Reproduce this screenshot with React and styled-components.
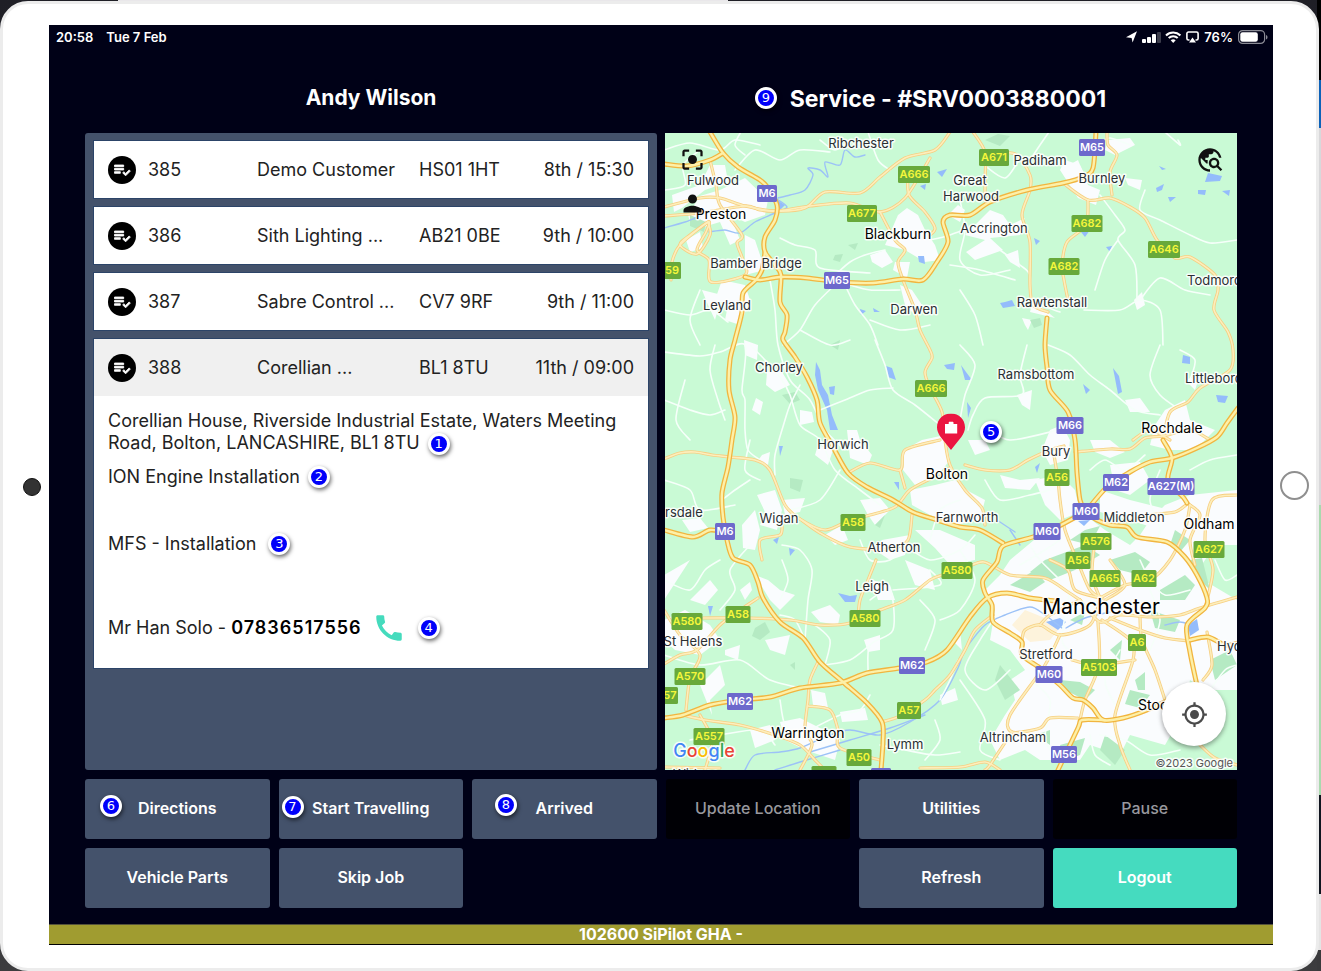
import React from 'react';
import styled, { createGlobalStyle, css } from 'styled-components';
import {
  MdPlaylistAddCheck,
  MdCall,
  MdCenterFocusStrong,
  MdPerson,
  MdTravelExplore,
  MdMyLocation,
} from 'react-icons/md';

const Global = createGlobalStyle`
  * { box-sizing: border-box; }
  html { height: 100%; }
  body {
    margin: 0;
    min-height: 100%;
    font-family: Inter, "Liberation Sans", sans-serif;
    background:
      linear-gradient(#e9e7ea, #e9e7ea) 118px 0 / 610px 2px no-repeat,
      linear-gradient(#000 0 80px, #0d62b8 80px 128px, #d8d8da 128px 505px, #a9d9ae 505px 795px, #10151f 795px 894px, #e4e4e4 894px 950px, #3a3a3c 950px) right top / 4px 100% no-repeat,
      linear-gradient(#1f1f26, #3c3c3e);
  }
  button { font: inherit; border: 0; padding: 0; cursor: pointer; }
`;

const Tablet = styled.div`
  display: grid;
  grid-template-columns: 46px minmax(0, 1fr) 43px;
  align-items: center;
  min-height: calc(100vh - 1px);
  margin: 1px 2px 0 0;
  padding: 21px 0 23px;
  background: #fff;
  border: 3px solid #ececec;
  border-radius: 28px;
`;

const Camera = styled.div`
  justify-self: end;
  width: 18px;
  height: 18px;
  margin: 4px 8px 0 0;
  border-radius: 50%;
  background: #333;
  border: 1px solid #111;
`;

const HomeButton = styled.button`
  justify-self: center;
  width: 29px;
  height: 29px;
  border-radius: 50%;
  background: #fff;
  border: 2px solid #8f8f8f;
`;

const Screen = styled.div`
  align-self: stretch;
  display: flex;
  flex-direction: column;
  background: #000117;
  color: #fff;
  border-bottom: 1px solid #000;
`;

const StatusBar = styled.header`
  display: flex;
  align-items: center;
  justify-content: space-between;
  height: 24px;
  padding: 0 5px 0 7px;
  font-size: 13px;
  font-weight: 600;
`;

const StatusGroup = styled.div`
  display: flex;
  align-items: center;
  gap: ${(p) => p.$gap}px;
`;

const Main = styled.main`
  flex: 1;
  display: flex;
  flex-direction: column;
  gap: 9px;
  padding: 0 36px 16px;
`;

const Columns = styled.div`
  flex: 1;
  display: grid;
  grid-template-columns: repeat(2, minmax(0, 1fr));
  grid-template-rows: 84px minmax(0, 1fr);
  column-gap: 8px;
`;

const Heading = styled.h1`
  display: flex;
  align-items: center;
  justify-content: center;
  margin: 0;
  padding: ${(p) => (p.$large ? '16px 6px 0 0' : '14px 0 2px')};
  font-size: ${(p) => (p.$large ? 23 : 21)}px;
  font-weight: 700;
`;

const HeadingText = styled.span`
  position: relative;
`;

const Badge = styled.span`
  display: inline-flex;
  align-items: center;
  justify-content: center;
  flex: none;
  width: 22px;
  height: 22px;
  border: 3px solid #fff;
  border-radius: 50%;
  background: #0000fa;
  color: #fff;
  font: 13px/16px "DejaVu Sans", sans-serif;
  box-shadow: 1px 2px 4px rgba(0, 0, 0, 0.6);
  ${(p) =>
    p.$over &&
    css`
      position: absolute;
      left: ${p.$left};
      top: ${p.$top};
      transform: translate(-50%, -50%);
    `}
`;

const JobPanel = styled.section`
  display: flex;
  flex-direction: column;
  gap: 9px;
  padding: 8px 9px;
  background: #44526b;
  border-radius: 3px;
`;

const JobCard = styled.article`
  background: #fff;
  color: #222;
  font-size: 18px;
  box-shadow: 0 0 0 1px #2c4468;
`;

const JobHeader = styled.button`
  display: grid;
  grid-template-columns: 28px minmax(0, 97fr) minmax(0, 150fr) minmax(0, 90fr) minmax(0, 113fr);
  column-gap: 12px;
  align-items: center;
  width: 100%;
  height: 57px;
  padding: 0 14px;
  background: ${(p) => (p.$open ? '#f0f0f0' : '#fff')};
  color: inherit;
  text-align: left;
  white-space: nowrap;
`;

const JobIcon = styled.span`
  display: flex;
  align-items: center;
  justify-content: center;
  width: 28px;
  height: 28px;
  border-radius: 50%;
  background: #000;
  color: #fff;

  path:not([fill="none"]) { stroke: #fff; stroke-width: 1px; }
`;

const JobTime = styled.span`
  text-align: right;
`;

const JobDetails = styled.div`
  padding: 14px 14px 10px;
  line-height: 22px;
`;

const DetailLine = styled.p`
  display: flex;
  align-items: center;
  gap: ${(p) => p.$gap || 8}px;
  margin: 0;
  min-height: ${(p) => p.$height}px;
`;

const Address = styled.p`
  margin: 0 0 10px;

  ${Badge} {
    margin: -3px 0 -3px 8px;
    vertical-align: middle;
  }
`;

const PhoneLink = styled.a`
  color: #000;
  display: inline-flex;
  align-items: center;
  gap: 10px;
  font-weight: 600;
  letter-spacing: 1px;
  text-decoration: none;

  svg { color: #45dbbd; }
`;

const MapPanel = styled.section`
  position: relative;
  overflow: hidden;
  background: #c9fad5;
`;

const MapSvg = styled.svg`
  position: absolute;
  inset: 0;
  width: 100%;
  height: 100%;
  display: block;
`;

const MapTool = styled.button`
  position: absolute;
  top: ${(p) => p.$top}px;
  ${(p) => (p.$right ? 'right: 13px' : 'left: 14px')};
  display: flex;
  background: none;
  color: #111;
`;

const LocateButton = styled.button`
  position: absolute;
  right: 11px;
  bottom: 24px;
  display: flex;
  align-items: center;
  justify-content: center;
  width: 64px;
  height: 64px;
  border-radius: 50%;
  background: #fff;
  color: #4a4a4a;
  box-shadow: 0 2px 5px rgba(0, 0, 0, 0.4);
`;

const Pin = styled.svg`
  position: absolute;
  left: 50%;
  top: 47%;
  transform: translate(-50%, -50%);
`;

const ButtonGrid = styled.nav`
  display: grid;
  grid-template-columns: repeat(6, minmax(0, 1fr));
  gap: 9px;
`;

const tones = {
  normal: ['#44526b', '#fff'],
  disabled: ['#000005', '#98989e'],
  primary: ['#45dbbf', '#fff'],
};

const ActionButton = styled.button`
  position: relative;
  height: 60px;
  padding-bottom: 2px;
  border-radius: 3px;
  background: ${(p) => tones[p.$tone][0]};
  color: ${(p) => tones[p.$tone][1]};
  font-size: 16px;
  font-weight: ${(p) => (p.$tone === 'disabled' ? 500 : 600)};
  grid-column: ${(p) => p.$column || 'auto'};
`;

const Footer = styled.footer`
  height: 20px;
  background: #a09c30;
  border-top: 1px solid #55533a;
  font-size: 16px;
  line-height: 18px;
  font-weight: 700;
  text-align: center;
`;

/* Turns "x,y x,y ..." into a smooth path through every point. */
function curve(text) {
  const p = text.split(' ').map((s) => s.split(',').map(Number));
  let d = `M${p[0][0]} ${p[0][1]}`;
  for (let i = 0; i < p.length - 1; i++) {
    const a = p[i - 1] || p[i];
    const b = p[i];
    const c = p[i + 1];
    const e = p[i + 2] || c;
    d += `C${b[0] + (c[0] - a[0]) / 7} ${b[1] + (c[1] - a[1]) / 7} ${c[0] - (e[0] - b[0]) / 7} ${c[1] - (e[1] - b[1]) / 7} ${c[0]} ${c[1]}`;
  }
  return d;
}

const motorways = [
  '710,132 723,153 738,167 760,180 768,188 777,205 775,220 765,237 765,252 775,265 781,275 780,302 787,315 785,332 783,340 795,357 807,377 817,400 820,423 833,447 848,473 867,487 893,500 913,512 937,520 960,527 980,530 1003,543',
  '765,252 762,270 756,280 743,293 742,312 735,340 730,360 729,390 735,417 732,440 728,467 722,493 723,517 727,540 733,558 750,565 758,582 763,598 780,622 803,638 820,662 843,682 867,703 882,722 883,742 881,770',
  '745,277 760,280 780,277 807,278 840,282 873,283 903,279 923,280 937,262 948,242 943,222 950,215 970,215 990,202 1027,190 1063,183 1083,177 1093,168 1096,132',
  '1047,318 1045,345 1047,367 1050,390 1068,412 1075,440 1077,473 1080,500 1085,510',
  '1087,510 1107,487 1130,472 1150,462 1172,458 1197,448 1217,437 1227,423 1238,408',
  '1163,440 1172,458 1168,480 1183,497 1187,503',
  '1085,512 1057,527 1033,537 1003,546 997,562 983,580 985,593 992,605 993,622 1010,633 1022,642 1022,655 1040,668 1060,685 1073,698 1083,700 1093,708 1103,720 1123,718 1147,710 1175,697 1198,685',
  '1085,512 1097,520 1110,525 1127,527 1137,537 1167,542 1184,556 1197,575 1207,598 1205,608 1187,625 1190,652 1198,690',
  '664,718 683,715 710,705 740,700 770,697 800,688 840,683 867,673 900,668 927,662 947,650 970,617 987,598 1007,593 1030,598 1055,601',
  '664,530 693,537 710,530 727,532',
  '664,164 687,166 710,160 723,153',
  '1058,770 1078,728 1082,720 1103,720',
  '1190,640 1208,637 1225,645 1238,643',
];

const aRoads = [
  '950,132 935,150 905,158 880,177 860,193 825,192 805,208 775,211 745,206 720,198 700,198 664,207',
  '710,160 716,185 720,205 742,235 737,243 743,260 745,275 711,282 709,260 697,250 706,232 708,222 680,245 672,262 671,280',
  '664,216 700,213 745,206 760,210 777,211 810,206 850,203 880,212 905,198 930,158',
  '708,222 690,235 680,245 697,254 710,235 708,222',
  '908,174 909,195 925,212 935,228 930,235',
  '880,212 895,240 905,250 898,262 903,280 915,310 920,330 930,350 932,358 925,372 930,388 942,412 945,440 950,465 965,490 982,508 985,525',
  '973,132 985,152 985,180 985,200',
  '985,153 1015,154 1030,175 1030,190 1022,215 1030,242 1030,285 1033,305 1048,312',
  '1063,183 1088,200 1110,198 1130,207 1145,218 1157,240 1175,258 1190,257 1215,275 1218,290 1214,310 1228,332 1233,350 1230,370 1200,388 1188,402 1170,412 1163,440',
  '1107,132 1108,145 1117,155 1110,172 1112,195',
  '1088,200 1086,225 1067,242 1062,265 1064,280 1068,300',
  '1075,452 1110,449 1130,449 1145,438 1163,436 1190,430 1210,440',
  '965,465 985,470 1010,470 1028,460 1050,450 1064,446',
  '950,468 932,478 910,490 895,507 870,515 850,520 825,530 800,519 785,505 770,470 755,460 730,457 712,455 695,452 680,453 664,459',
  '848,473 870,463 900,470 905,450 940,440',
  '900,470 905,488',
  '1054,455 1058,480 1060,500 1065,530 1077,560 1090,590 1102,598',
  '1133,440 1150,430 1170,440',
  '800,519 820,533 850,547 890,549 908,540 912,515',
  '762,560 760,540 780,535 782,525',
  '876,560 868,580 860,600 858,618',
  '703,618 750,618 790,620 820,625 850,623 880,610 905,600 930,580 945,574 965,568 984,562 1010,575 1045,578 1068,592 1080,600',
  '664,610 680,635 700,655 690,678 686,710',
  '664,664 680,655 697,650 720,625 740,610 758,598',
  '683,715 705,720 740,725 775,735 800,745 815,760 825,770',
  '800,770 812,745 805,730 808,700 810,680 818,662',
  '808,706 830,710 838,730 840,748 880,760',
  '882,722 900,716 925,700 935,690 950,675 965,650 975,630 993,615',
  '705,770 712,740 700,715',
  '1100,600 1090,625 1060,635 1040,625 1025,630 1022,640',
  '1080,600 1100,622 1120,615 1150,617 1180,615 1200,608 1237,597',
  '1100,598 1092,575 1095,540',
  '1100,598 1125,585 1150,580 1170,560 1185,530 1190,505',
  '1105,600 1125,585 1110,560',
  '1102,620 1130,640 1133,660 1115,715 1120,745 1130,770',
  '1110,618 1140,630 1165,638 1190,641',
  '1140,618 1142,640 1155,670 1165,700',
  '1098,622 1099,665 1085,700 1080,720',
  '1072,660 1095,665 1135,660',
  '1060,635 1045,665 1010,715 1012,732 1040,728 1050,718 1078,718',
  '1012,732 990,765 985,770',
  '664,767 720,768',
  '920,768 960,767 985,762 1000,770',
  '1205,608 1213,570 1205,540 1212,500 1237,495',
  '1187,503 1200,515 1190,540 1195,565',
  '1207,632 1212,665 1203,680',
  '1200,745 1215,758 1237,765',
  '1125,522 1150,515 1175,512 1186,505',
  '1100,598 1075,590 1068,570 1050,560',
  '1080,600 1050,615 1040,625',
];

const minorRoads = [
  '664,150 690,143 720,150 735,140 760,145', '665,190 685,185 683,165 700,150',
  '735,170 755,150 780,160 800,150 830,152', '868,132 878,160 890,170',
  '1049,132 1040,145 1030,160', '1085,145 1100,142 1110,138 1130,145',
  '780,238 795,245 815,250 820,268 870,273', '838,282 815,305 800,330 783,345',
  '845,285 855,305 870,325 878,345', '835,275 850,262 865,255 885,250',
  '770,280 775,310 778,345 790,380 810,400 825,430 845,450',
  '664,310 690,315 710,310 728,322', '664,352 700,356 720,352 745,345 742,390 745,400 745,430 748,450 760,460',
  '715,345 710,370 718,400 725,420', '750,345 765,360 782,380 790,395 800,425 820,440 835,470 860,490 880,505',
  '800,385 790,405 785,420 775,455 775,475', '875,340 885,365 893,390 915,405 940,425',
  '893,388 870,390 845,400 820,410', '664,400 690,410 710,415 725,410',
  '685,380 676,420 690,440', '1027,345 1020,375 1022,395 985,398 973,415 968,430',
  '1048,345 1070,355 1090,375 1110,390 1135,410 1160,415', '1160,345 1150,375 1160,395 1180,410',
  '1000,250 1020,265 1030,275 1033,300 1060,312', '1084,310 1120,310 1140,300 1160,310 1163,345',
  '1100,195 1115,215 1125,230 1118,240 1135,265 1137,300', '1140,300 1160,278 1185,290 1210,295',
  '1145,190 1140,210 1160,220 1190,235 1210,243 1237,240', '960,200 965,230 960,260 980,275 1010,270',
  '950,265 980,270 1015,280', '960,290 975,315 983,345', '1118,240 1105,260 1095,290',
  '984,165 1005,178 1020,158', '990,220 950,235 930,240',
  '900,290 870,290 850,285', '960,345 975,365 965,395 960,420',
  '664,480 690,490 700,510 735,505', '720,610 735,590 730,570 750,545',
  '782,545 800,550 812,570 808,600 805,640', '815,625 830,640 825,665', '805,640 795,620 780,615',
  '870,600 890,590 893,630 870,645 868,670', '893,590 940,585 930,570', '825,665 850,660 870,645',
  '782,560 788,580 780,600', '664,580 690,590 705,570 720,560', '664,655 700,665 740,660 770,680 810,690',
  '780,700 785,725 800,735', '810,730 840,715 860,710 870,695', '880,745 905,750 935,755 960,752',
  '940,700 950,680 958,660', '935,720 940,740 925,760', '690,740 720,735 760,730 775,745',
  '750,480 735,490 722,500', '750,440 745,470 760,480', '840,470 820,500 790,510',
  '860,540 870,560 890,560 905,545', '905,545 930,560 960,550 975,535', '960,500 940,510 930,540',
  '985,480 1000,500 1030,495 1050,490', '990,430 1010,440 1050,432 1070,425',
  '1090,470 1105,460 1125,470 1145,455', '1160,470 1150,500 1160,530 1150,550',
  '1000,610 980,640 965,670 985,690 1010,670', '960,680 985,720 980,750 1000,760',
  '1030,680 1050,700 1045,740 1060,760', '1120,650 1105,680 1115,705', '1150,650 1160,620 1150,590',
  '1060,580 1040,560 1030,545', '1020,565 1045,550 1060,540', '1070,590 1062,640 1075,655',
  '1140,560 1150,580 1165,595 1190,590', '1215,560 1225,580 1237,575', '1210,690 1225,670 1237,665',
  '1100,735 1125,740 1150,755 1180,750', '1090,735 1095,755 1110,765', '1190,470 1210,460 1237,455',
  '1180,350 1195,360 1190,380', '820,140 835,150 850,140', '870,320 900,330 930,325',
  '800,330 830,345 850,340', '700,290 690,320 700,345', '960,550 975,580 960,610 940,620',
  '920,600 935,620 925,650', '742,130 735,145 745,155', '1165,132 1180,145 1178,140',
];

const urban = [
  '688,215 700,196 720,190 745,178 768,200 765,215 745,222 730,215 740,240 730,245 720,222 700,228 690,222',
  '710,165 725,165 728,182 705,190 682,208 674,212 672,195 700,185',
  '745,235 755,240 765,270 745,275', '686,240 700,232 703,248 690,252', '722,280 745,285 750,300 740,325 725,320 728,305 715,300',
  '702,290 722,295 715,320 708,305', '898,215 907,208 918,215 925,230 935,245 940,260 925,262 905,250 885,245', '870,255 885,250 893,262 882,268 872,262',
  '895,262 910,262 907,278 893,270', '900,285 912,290 922,305 918,318 905,305', '965,235 990,210 1003,215 1010,225 1025,218 1020,235 990,238 1003,250 975,260 966,252 985,240',
  '958,205 965,210 960,222 948,215', '1060,170 1078,160 1088,185 1100,190 1096,205 1078,198', '1065,160 1080,165 1085,175 1060,170',
  '1108,140 1130,138 1135,145 1115,155 1105,150', '1125,178 1142,180 1140,190 1128,185', '1005,255 1018,250 1020,268 1010,262', '1033,300 1045,310 1055,318 1030,312',
  '1022,318 1032,320 1028,330 1025,325', '1134,300 1142,292 1145,305 1137,310', '744,340 758,345 757,360 745,355', '767,372 782,372 790,385 775,392 766,385',
  '756,398 763,402 760,415 752,410', '800,410 812,412 814,422 800,425', '847,430 857,430 860,440 872,455 868,465 850,458',
  '818,445 833,450 828,465 815,455', '904,450 922,440 945,435 950,460 938,475 915,485 903,470', '910,490 935,485 955,480 970,492 985,500 980,520 955,525 930,515 912,505',
  '860,500 880,498 890,510 875,525 868,515', '915,530 940,530 975,545 975,560 950,565 935,548', '882,540 910,535 905,555 890,560 875,550', '762,455 770,452 768,465 757,462',
  '757,495 775,490 782,510 777,530 760,525 765,512', '782,500 805,498 800,512 785,515', '742,525 755,510 760,530 755,550 743,548', '825,535 842,525 848,540 835,545',
  '682,520 700,518 708,528 690,532', '755,575 768,580 780,590 795,595 780,610 770,600', '811,612 830,605 840,615 838,625 820,622', '765,640 790,635 785,655 770,650',
  '664,575 690,560 664,600', '690,600 710,580 718,590 705,605', '740,590 750,582 752,590 745,600', '664,620 685,610 710,625 720,640 700,655 675,650 664,640',
  '864,640 880,635 880,650 868,652', '725,650 740,645 738,660 725,655', '700,685 720,665 725,685 710,700 712,715', '750,730 770,725 775,740 755,748', '840,712 865,708 868,720 842,722',
  '811,690 825,693 828,708 813,705', '780,722 800,718 820,728 840,740 835,760 805,750 785,740', '905,560 930,570 935,590 915,585', '872,580 890,585 895,600 878,600',
  '952,640 960,630 962,650', '940,695 955,688 958,700 942,705', '1165,410 1185,400 1190,420 1215,430 1195,450 1170,450 1150,445 1155,425', '1125,400 1140,398 1150,412 1130,412',
  '1090,440 1110,440 1125,452 1110,458 1095,452', '1110,465 1140,462 1150,480 1130,495 1115,490', '1050,430 1062,425 1070,440 1068,460 1050,465 1042,450', '1017,395 1032,390 1030,410 1022,405',
  '1035,480 1060,475 1075,490 1080,512 1060,520 1045,505', '968,440 985,440 990,450 975,455', '1000,475 1020,480 1040,478 1030,490 1005,488', '1185,380 1200,375 1195,390',
  '1010,560 1040,535 1060,527 1085,515 1105,530 1130,545 1140,535 1150,520 1165,505 1190,495 1237,490 1237,545 1215,545 1205,560 1195,575 1237,600 1237,690 1205,690 1190,680 1185,710 1165,745 1130,735 1120,755 1090,745 1080,760 1040,760 1025,750 1000,760 990,740 1005,715 1015,700 1010,680 1025,670 1010,650 990,640 995,610 985,590 1000,575',
  '1100,490 1130,500 1170,510 1160,530 1130,520 1100,512',
];

const parks = [
  '985,140 998,134 1010,136 1000,146 990,142', '835,255 843,254 840,262 833,260', '848,245 858,243 855,250', '782,395 795,392 800,400 790,404', '830,345 840,340 838,350',
  '790,478 803,480 800,492 790,488', '755,628 765,622 770,632 760,640 752,636', '690,215 706,222 704,232 690,226', '1045,560 1085,545 1100,555 1075,570 1050,580 1030,572',
  '1110,560 1135,552 1150,562 1140,575 1120,570', '1160,590 1185,575 1195,585 1185,600 1160,600', '1010,585 1035,570 1045,582 1030,592', '1060,680 1080,682 1095,690 1085,700 1065,690',
  '1150,610 1180,620 1175,632 1155,628', '1110,650 1122,640 1120,660', '1135,680 1145,672 1145,690 1138,690', '1175,530 1190,540 1180,552 1170,545', '1000,665 1020,690 1005,700 995,680',
  '1105,735 1125,750 1115,765 1100,750', '1060,745 1085,738 1080,755 1065,760', '1190,560 1202,558 1210,590 1200,580', '1130,690 1150,695 1140,708 1125,704', '1210,660 1230,650 1237,665 1215,680',
  '1035,735 1050,730 1050,745', '1070,620 1085,612 1082,625', '1085,530 1100,526 1090,545 1070,540', '1030,320 1040,318 1042,325 1034,328', '875,525 885,515 880,528', '790,665 795,662 795,670',
];

const water = [
  '816,362 820,370 822,385 828,395 832,415 838,430 830,430 827,410 818,390 815,375', '829,387 835,386 834,395 830,394', '886,366 892,368 896,380 888,377', '944,365 955,363 954,370 947,369',
  '1205,182 1220,181 1222,176 1208,173', '1156,188 1164,184 1162,190 1157,192', '1168,197 1176,197 1170,202', '1198,190 1206,190 1205,195 1198,194', '1222,191 1230,190 1229,196', '1159,166 1166,169 1162,170',
  '1081,232 1090,230 1085,237', '1106,247 1112,246 1110,252', '937,172 947,169 942,177', '920,186 926,184 925,190', '918,256 924,256 925,264 919,262', '1034,238 1040,241 1036,245', '1000,303 1005,302 1012,300 1015,306 1003,308',
  '1183,355 1190,357 1190,364 1182,363', '1113,368 1119,376 1122,392 1118,394', '1083,384 1090,390 1086,394', '1216,395 1228,396 1225,403 1218,402', '961,365 966,372 972,380 965,380', '967,402 971,408 968,418',
  '838,593 850,596 857,595 855,602 845,602', '779,446 783,446 780,456', '1188,625 1197,619 1199,630 1190,636', '1046,622 1060,618 1066,622 1058,630', '894,482 899,482 899,490', '773,540 779,537 777,544', '789,548 795,550 790,556',
  '708,606 713,606 710,616', '1078,521 1090,520 1084,526', '1035,467 1040,463 1037,473', '860,309 866,311 861,315', '873,308 880,312 874,312', '777,200 785,205 780,210',
];

const rivers = [
  '778,198 790,195 805,190 813,175 808,168 820,170 828,177 825,162 840,165 845,150 855,157 865,155',
  '664,228 685,222 700,216', '709,232 725,230 740,233 755,222 775,213 787,207 775,198',
  '745,770 755,755 780,752 800,748 830,735 850,730 880,735 910,722 940,700 958,668 965,650 985,625 1005,615 1030,607 1045,615 1062,628',
  '810,752 850,740 890,728 925,715', '775,770 800,762 840,750', '1066,628 1085,618 1110,612',
  '1010,530 1020,545', '997,520 1015,532', '1165,625 1180,622 1190,625',
];

const shields = [
  ['M65', 1092, 147, 26], ['M6', 767, 193, 20], ['M65', 837, 280, 26], ['M66', 1070, 425, 27], ['M62', 1116, 482, 26], ['A627(M)', 1171, 486, 47], ['M60', 1086, 511, 27], ['M60', 1047, 531, 27],
  ['M6', 725, 531, 20], ['M62', 912, 665, 26], ['M62', 740, 701, 26], ['M60', 1049, 674, 27], ['M56', 1064, 754, 26], ['', 881, 776, 20],
  ['A671', 994, 157, 30], ['A666', 914, 174, 32], ['A677', 862, 213, 30], ['A682', 1087, 223, 31], ['A682', 1064, 266, 31], ['A646', 1164, 249, 32], ['59', 672, 270, 18], ['A666', 931, 388, 32],
  ['A56', 1057, 477, 25], ['A58', 853, 522, 25], ['A576', 1096, 541, 31], ['A56', 1078, 560, 25], ['A580', 957, 570, 31], ['A665', 1105, 578, 31], ['A62', 1144, 578, 25], ['A627', 1209, 549, 31],
  ['A580', 687, 621, 31], ['A58', 738, 614, 25], ['A580', 865, 618, 31], ['A6', 1137, 642, 18], ['A5103', 1099, 667, 36], ['A570', 690, 676, 31], ['57', 670, 695, 16], ['A57', 909, 710, 24],
  ['A557', 709, 736, 31], ['A50', 859, 757, 25], ['', 824, 774, 25],
];

const towns = [
  ['Ribchester', 861, 143], ['Fulwood', 713, 180], ['Great', 970, 180], ['Harwood', 971, 196], ['Padiham', 1040, 160], ['Burnley', 1102, 178], ['Accrington', 994, 228], ['Bamber Bridge', 756, 263],
  ['Leyland', 727, 305], ['Darwen', 914, 309], ['Rawtenstall', 1052, 302], ['Ramsbottom', 1036, 374], ['Chorley', 779, 367], ['Horwich', 843, 444], ['Bury', 1056, 451], ['Middleton', 1134, 517],
  ['Wigan', 779, 518], ['Farnworth', 967, 517], ['Atherton', 894, 547], ['Leigh', 872, 586], ['St Helens', 693, 641], ['Stretford', 1046, 654], ['Altrincham', 1013, 737], ['Lymm', 905, 744],
  ['Todmord', 1187, 280, 'start'], ['Littlebord', 1185, 378, 'start'], ['rsdale', 665, 512, 'start'], ['Hyd', 1217, 646, 'start'], ['Widnes', 673, 774, 'start'],
];

const cities = [
  ['Preston', 721, 214], ['Blackburn', 898, 234], ['Bolton', 947, 474], ['Rochdale', 1172, 428], ['Oldham', 1209, 524], ['Warrington', 808, 733], ['Stoc', 1153, 705],
];

const MapLabel = styled.text`
  font-family: Inter, "Liberation Sans", sans-serif;
  font-size: ${(p) => p.$size}px;
  font-weight: ${(p) => p.$weight || 400};
  fill: ${(p) => p.$color};
  text-anchor: ${(p) => p.$anchor || 'middle'};
  paint-order: stroke;
  stroke: ${(p) => (p.$halo ? 'rgba(255,255,255,0.85)' : 'none')};
  stroke-width: 3px;
  stroke-linejoin: round;
`;

const Lines = ({ data, color, width }) => (
  <g fill="none" stroke={color} strokeWidth={width} strokeLinecap="round" strokeLinejoin="round">
    {data.map((t) => (
      <path key={t} d={curve(t)} />
    ))}
  </g>
);

const Shapes = ({ data, color }) => (
  <g fill={color}>
    {data.map((t) => (
      <polygon key={t} points={t} />
    ))}
  </g>
);

const googleLetters = [['G', '#4285f4'], ['o', '#ea4335'], ['o', '#fbbc05'], ['g', '#4285f4'], ['l', '#34a853'], ['e', '#ea4335']];

function RegionMap() {
  return (
    <MapSvg viewBox="665 133 572 637" preserveAspectRatio="xMidYMid slice" role="img" aria-label="Map of Greater Manchester">
      <rect x="665" y="133" width="572" height="637" fill="#c9fad5" />
      <Shapes data={urban} color="#fafcfe" />
      <Shapes data={parks} color="#b5eac3" />
      <polygon points="1012,625 1025,610 1045,618 1058,630 1050,640 1030,642" fill="#fdf3dc" />
      <Shapes data={water} color="#94bcfb" />
      <Lines data={rivers} color="#9cc2f7" width={1.4} />
      <Lines data={minorRoads} color="#f6fffa" width={1.6} />
      <Lines data={aRoads} color="#f6cf82" width={3.2} />
      <Lines data={aRoads} color="#fdeebc" width={1.6} />
      <Lines data={motorways} color="#f1b53f" width={5} />
      <Lines data={motorways} color="#fdf0a8" width={2.4} />
      {shields.map(([name, x, y, w], i) => (
        <g key={i}>
          <rect x={x - w / 2} y={y - 8} width={w} height="17" rx="1.5" fill={i < 14 ? '#6d69cc' : '#68a93b'} />
          <MapLabel x={x} y={y + 4} $size={11} $weight={600} $color={i < 14 ? '#fff' : '#f5f73c'}>{name}</MapLabel>
        </g>
      ))}
      {towns.map(([name, x, y, anchor]) => (
        <MapLabel key={name} x={x} y={y + 5} $size={13} $color="#2b2f33" $anchor={anchor} $halo>{name}</MapLabel>
      ))}
      {cities.map(([name, x, y]) => (
        <MapLabel key={name} x={x} y={y + 5} $size={14} $color="#000" $halo>{name}</MapLabel>
      ))}
      <MapLabel x="1101" y="614" $size={21} $color="#000" $halo>Manchester</MapLabel>
      <MapLabel x="704" y="757" $size={18} $weight={500} $color="#4285f4" $halo>
        {googleLetters.map(([c, fill], i) => (
          <tspan key={i} fill={fill}>{c}</tspan>
        ))}
      </MapLabel>
      <MapLabel x="1233" y="767" $size={11} $color="#555" $anchor="end" $halo>©2023 Google</MapLabel>
    </MapSvg>
  );
}

const StatusIcons = () => (
  <svg width="55" height="14" viewBox="0 0 55 14" fill="none" aria-hidden="true">
    <path d="M0 7.2 11 1.2 6.6 12.6 5.6 7.9Z" fill="#fff" />
    <rect x="16" y="9" width="4" height="4" rx="1" fill="#fff" />
    <rect x="21" y="7" width="4" height="6" rx="1" fill="#fff" />
    <rect x="26" y="4" width="4" height="9" rx="1" fill="#fff" />
    <rect x="31" y="2" width="4" height="11" rx="1" fill="#3c3d4c" />
    <path d="M40 5.4a10.400 10.400 0 0 1 14.400 0M42.700 8.100a6.500 6.500 0 0 1 9 0" stroke="#fff" strokeWidth="2.100" />
    <path d="M44.700 10.300a3.800 3.800 0 0 1 5 0L47.200 13Z" fill="#fff" />
  </svg>
);

const AirplayIcon = () => (
  <svg width="13" height="12" viewBox="0 0 13 12" aria-hidden="true">
    <path d="M3.500 9H2.500A1.600 1.600 0 0 1 .9 7.400v-4.800A1.600 1.600 0 0 1 2.500 1h8a1.600 1.600 0 0 1 1.600 1.600v4.800A1.600 1.600 0 0 1 10.500 9h-1" fill="none" stroke="#fff" strokeWidth="1.600" />
    <path d="M6.500 6.500 10 11.500H3Z" fill="#fff" />
  </svg>
);

const BatteryIcon = () => (
  <svg width="30" height="14" viewBox="0 0 30 14" aria-hidden="true">
    <rect x=".6" y=".6" width="26" height="12.800" rx="4" fill="none" stroke="#8a8b95" strokeWidth="1.200" />
    <rect x="2.300" y="2.300" width="17.500" height="9.400" rx="2.200" fill="#fff" />
    <path d="M28 5v4.500c1.300-.6 1.500-1.500 1.500-2.200S29.300 5.500 28 5Z" fill="#8a8b95" />
  </svg>
);

const jobs = [
  ['385', 'Demo Customer', 'HS01 1HT', '8th / 15:30'],
  ['386', 'Sith Lighting ...', 'AB21 0BE', '9th / 10:00'],
  ['387', 'Sabre Control ...', 'CV7 9RF', '9th / 11:00'],
  ['388', 'Corellian ...', 'BL1 8TU', '11th / 09:00'],
];

const JobSummary = ({ job: [id, name, postcode, time], open }) => (
  <JobHeader type="button" $open={open} aria-expanded={!!open}>
    <JobIcon><MdPlaylistAddCheck size={20} /></JobIcon>
    <span>{id}</span>
    <span>{name}</span>
    <span>{postcode}</span>
    <JobTime>{time}</JobTime>
  </JobHeader>
);

const actions = [
  { label: 'Directions', badge: 6, left: '26px', top: '27px' },
  { label: 'Start Travelling', badge: 7, left: '14px', top: '28px' },
  { label: 'Arrived', badge: 8, left: '34px', top: '26px' },
  { label: 'Update Location', tone: 'disabled' },
  { label: 'Utilities' },
  { label: 'Pause', tone: 'disabled' },
  { label: 'Vehicle Parts' },
  { label: 'Skip Job' },
  { label: 'Refresh', column: 5 },
  { label: 'Logout', tone: 'primary' },
];

export default function App() {
  return (
    <>
      <Global />
      <Tablet>
        <Camera />
        <Screen>
          <StatusBar>
            <StatusGroup $gap={13}>
              <span>20:58</span>
              <span>Tue 7 Feb</span>
            </StatusGroup>
            <StatusGroup $gap={5}>
              <StatusIcons />
              <AirplayIcon />
              <span>76%</span>
              <BatteryIcon />
            </StatusGroup>
          </StatusBar>
          <Main>
            <Columns>
              <Heading>Andy Wilson</Heading>
              <Heading as="h2" $large>
                <HeadingText>
                  Service - #SRV0003880001
                  <Badge $over $left="-24px" $top="45%">9</Badge>
                </HeadingText>
              </Heading>
              <JobPanel>
                {jobs.slice(0, 3).map((job) => (
                  <JobCard key={job[0]}><JobSummary job={job} /></JobCard>
                ))}
                <JobCard>
                  <JobSummary job={jobs[3]} open />
                  <JobDetails>
                    <Address>
                      Corellian House, Riverside Industrial Estate, Waters Meeting Road, Bolton, LANCASHIRE, BL1 8TU
                      <Badge>1</Badge>
                    </Address>
                    <DetailLine $height={26}>ION Engine Installation <Badge>2</Badge></DetailLine>
                    <DetailLine $height={108} $gap={12}>MFS - Installation <Badge>3</Badge></DetailLine>
                    <DetailLine $height={60} $gap={12}>
                      <span>
                        Mr Han Solo -{' '}
                        <PhoneLink href="tel:07836517556">07836517556 <MdCall size={34} /></PhoneLink>
                      </span>
                      <Badge>4</Badge>
                    </DetailLine>
                  </JobDetails>
                </JobCard>
              </JobPanel>
              <MapPanel>
                <RegionMap />
                <MapTool type="button" aria-label="Centre on job" $top={13}><MdCenterFocusStrong size={27} /></MapTool>
                <MapTool type="button" aria-label="Centre on me" $top={57}><MdPerson size={27} /></MapTool>
                <MapTool type="button" aria-label="Explore map" $top={13} $right><MdTravelExplore size={28} /></MapTool>
                <Pin width="28" height="37" viewBox="0 0 28 37" aria-label="Job location">
                  <path d="M14 0C6 0 0 6 0 13.700 0 20.500 5 25 14 36.500 23 25 28 20.500 28 13.700 28 6 22 0 14 0Z" fill="#eb1540" />
                  <path d="M8 10.500h3.700V9.200c0-.6.4-1 1-1h2.800c.6 0 1 .4 1 1v1.300h3.700v9.500H8Z" fill="#fff" />
                </Pin>
                <Badge $over $left="57%" $top="47%">5</Badge>
                <LocateButton type="button" aria-label="My location"><MdMyLocation size={27} /></LocateButton>
              </MapPanel>
            </Columns>
            <ButtonGrid>
              {actions.map((a) => (
                <ActionButton key={a.label} type="button" disabled={a.tone === 'disabled'} $tone={a.tone || 'normal'} $column={a.column}>
                  {a.label}
                  {a.badge && <Badge $over $left={a.left} $top={a.top}>{a.badge}</Badge>}
                </ActionButton>
              ))}
            </ButtonGrid>
          </Main>
          <Footer>102600 SiPilot GHA -</Footer>
        </Screen>
        <HomeButton type="button" aria-label="Home" />
      </Tablet>
    </>
  );
}
